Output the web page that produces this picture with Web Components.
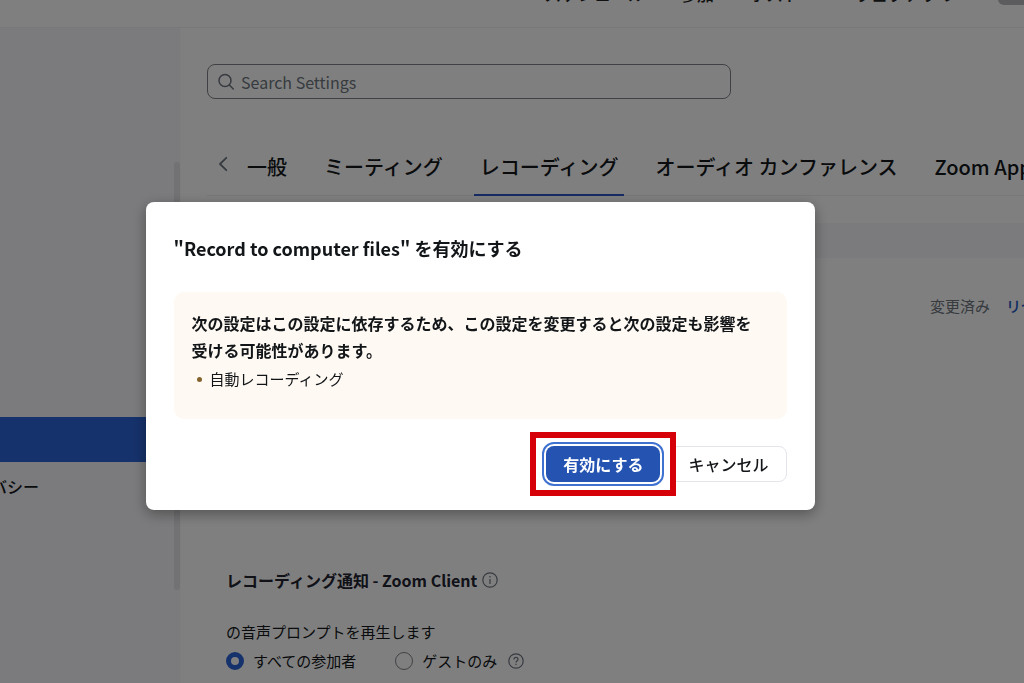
<!DOCTYPE html>
<html lang="ja">
<head>
<meta charset="utf-8">
<title>設定 - レコーディング</title>
<style>
  html, body { margin: 0; height: 100%; }
  body { font-family: "Noto Sans CJK JP", sans-serif; color: #131619; overflow: hidden; background: #fff; }
</style>
</head>
<body>
<settings-page></settings-page>
<script>
const define = (name, html) => {
  const template = document.createElement('template');
  template.innerHTML = html;
  customElements.define(name, class extends HTMLElement {
    constructor() {
      super();
      this.attachShadow({ mode: 'open' }).append(template.content.cloneNode(true));
    }
  });
};

define('top-nav', `
<style>
  :host { display: flex; justify-content: flex-end; box-sizing: border-box; height: 28px; border-bottom: 1px solid #f1f1f5; overflow: hidden; background: #fff; }
  nav { display: flex; align-items: flex-start; gap: 35px; margin-top: -18px; }
  a { color: #222325; text-decoration: none; font-size: 17px; line-height: 24px; font-weight: 500; white-space: nowrap; }
  .menu { padding-right: 19px; }
  .account { width: 26px; height: 23px; margin-left: 7px; border-radius: 0 0 0 6px; background: #b8b8bc; }
</style>
<nav>
  <a href="#schedule">スケジュール</a><a href="#join">参加</a><a class="menu" href="#host">ホスト</a><a href="#app">ウェブアプリ</a><span class="account"></span>
</nav>`);

define('side-bar', `
<style>
  :host { display: flex; justify-content: space-between; box-sizing: border-box; width: 181px; flex: none; background: #f7f7fa; border-right: 1px solid #fbfbfd; overflow: hidden; }
  nav { flex: 1; padding-top: 389px; margin-right: -6px; }
  a { display: block; box-sizing: border-box; height: 44px; font-size: 16px; line-height: 24px; padding-top: 12px; color: #131619; text-decoration: none; font-weight: 500; }
  a.on { background: #2d65d8; height: 45px; }
  i { width: 6px; height: 428px; margin-top: 134px; border-radius: 3px; background: #e4e4e8; }
  a span { display: block; width: 39px; direction: rtl; white-space: nowrap; overflow: hidden; }
</style>
<nav><a class="on" href="#settings" aria-label="設定"></a><a href="#privacy"><span>バシー</span></a></nav><i></i>`);

define('search-box', `
<style>
  :host { display: flex; align-items: center; gap: 6px; box-sizing: border-box; width: 524px; max-width: 100%; height: 35px; border: 1px solid #82838a; border-radius: 8px; padding: 0 9px; }
  svg { flex: none; width: 18px; height: 18px; }
  input { flex: 1; min-width: 0; border: 0; padding: 0; outline: 0; background: none; font: 16px/24px "Noto Sans CJK JP", sans-serif; color: #131619; }
  input::placeholder { color: #6e7680; opacity: 1; }
</style>
<svg viewBox="0 0 18 18" fill="none" stroke="#6e7680" stroke-width="1.5" stroke-linecap="round"><circle cx="8" cy="7.5" r="6"/><path d="M12.3 12l4 4"/></svg>
<input type="text" placeholder="Search Settings" aria-label="Search Settings">`);

define('tab-bar', `
<style>
  :host { display: flex; align-items: flex-start; height: 57px; box-sizing: border-box; border-bottom: 1px solid #f1f1f5; white-space: nowrap; }
  button { border: 0; background: none; padding: 0; margin: 16px 12px 0 10px; width: 12px; height: 18px; flex: none; }
  svg { display: block; width: 12px; height: 18px; }
  nav { display: flex; gap: 25px; }
  a { box-sizing: border-box; height: 57px; padding: 13px 6px 0; font-size: 20px; line-height: 30px; font-weight: 500; color: #131619; text-decoration: none; }
  a.on { border-bottom: 2px solid #2d56c8; }
</style>
<button aria-label="前へ"><svg viewBox="0 0 12 18" fill="none" stroke="#6e7680" stroke-width="1.8" stroke-linecap="round" stroke-linejoin="round"><path d="M9.3 2.8L3 9l6.3 6.2"/></svg></button>
<nav><a href="#general">一般</a><a href="#meeting">ミーティング</a><a class="on" href="#recording">レコーディング</a><a href="#audio">オーディオ カンファレンス</a><a href="#apps">Zoom Apps</a></nav>`);

define('recording-panel', `
<style>
  :host { display: block; margin-top: 27px; font-size: 15px; line-height: 24px; }
  .band { height: 35px; background: #f7f7fa; }
  .status { display: flex; gap: 16px; width: max-content; margin: 36px 0 0 723px; color: #6e7680; white-space: nowrap; }
  .status a { color: #2358c4; text-decoration: none; font-weight: 500; }
  section { padding: 250px 0 0 19px; }
  h2 { display: flex; align-items: center; gap: 5px; margin: 0; font-size: 16px; line-height: 24px; font-weight: 700; color: #222230; }
  p { margin: 28px 0 0; }
  svg { width: 16px; height: 16px; flex: none; }
  .choices { display: flex; align-items: center; margin-top: 5px; }
  label { display: flex; align-items: center; gap: 9px; }
  label + label { margin: 0 11px 0 39px; }
  input { appearance: none; box-sizing: border-box; width: 18px; height: 18px; margin: 0; border: 1px solid #82838a; border-radius: 50%; }
  input:checked { border: 5px solid #2d65d8; }
</style>
<div class="band"></div>
<div class="status"><span>変更済み</span><a href="#reset">リセット</a></div>
<section>
  <h2>レコーディング通知 - Zoom Client <svg viewBox="0 0 16 16" fill="none" stroke="#6e7680" stroke-width="1.2"><circle cx="8" cy="8" r="7.2"/><path d="M8 7v5M8 4v1.4"/></svg></h2>
  <p>の音声プロンプトを再生します</p>
  <div class="choices">
    <label><input type="radio" name="who" checked>すべての参加者</label>
    <label><input type="radio" name="who">ゲストのみ</label>
    <svg viewBox="0 0 16 16" fill="none" stroke="#6e7680" stroke-width="1.2"><circle cx="8" cy="8" r="7.2"/><path d="M6 6.4c0-2.6 4-2.6 4 0C10 7.8 8 7.8 8 9.6M8 10.8v1.3"/></svg>
  </div>
</section>`);

define('confirm-dialog', `
<style>
  :host { position: fixed; inset: 0; display: grid; justify-content: center; align-items: start; padding: 202px 64px 0 0; background: rgba(0,0,0,.5); }
  [role=dialog] { box-sizing: border-box; width: 669px; max-width: 100vw; padding: 32px 28px 28px; border-radius: 8px; background: #fff; box-shadow: 0 4px 14px rgba(0,0,0,.35); }
  h1 { margin: 0; font-size: 18px; line-height: 28px; font-weight: 700; }
  .actions { display: flex; justify-content: flex-end; gap: 10px; margin-top: 27px; }
  button { box-sizing: border-box; height: 36px; border-radius: 8px; padding: 0 17px; font: 500 16px/24px "Noto Sans CJK JP", sans-serif; white-space: nowrap; }
  .primary { position: relative; border: 0; background: #2453b2; color: #fff; font-weight: 700; outline: 2px solid #3f72d0; outline-offset: 2px; }
  /* highlight frame around the primary action */
  .primary::after { content: ""; position: absolute; inset: -14px -16px; border: 6px solid #d60008; }
  .cancel { border: 1px solid #e4e4ea; background: #fff; color: #131619; }
</style>
<div role="dialog" aria-modal="true" aria-labelledby="title">
  <h1 id="title">"Record to computer files" を有効にする</h1>
  <slot></slot>
  <div class="actions"><button class="primary">有効にする</button><button class="cancel">キャンセル</button></div>
</div>`);

define('warning-note', `
<style>
  :host { display: block; box-sizing: border-box; height: 127px; margin-top: 30px; padding: 18px 28px 18px 18px; border-radius: 10px; background: #fef9f2; font-size: 16px; line-height: 27px; }
  p { margin: 0; font-weight: 700; }
  ul { margin: 3px 0 0; padding: 0; list-style: none; }
  li { display: flex; align-items: center; gap: 8px; font-size: 15px; line-height: 24px; padding-left: 5px; }
  li::before { content: ""; width: 5px; height: 5px; border-radius: 50%; background: #85632f; }
</style>
<p>次の設定はこの設定に依存するため、この設定を変更すると次の設定も影響を受ける可能性があります。</p>
<ul><li>自動レコーディング</li></ul>`);

define('settings-page', `
<style>
  :host { display: flex; flex-direction: column; height: 100%; overflow: hidden; }
  .body { display: flex; flex: 1; min-height: 0; }
  main { flex: 1; min-width: 0; padding: 36px 0 0 26px; overflow: hidden; }
  tab-bar { margin-top: 40px; }
</style>
<top-nav></top-nav>
<div class="body">
  <side-bar></side-bar>
  <main><search-box></search-box><tab-bar></tab-bar><recording-panel></recording-panel></main>
</div>
<confirm-dialog><warning-note></warning-note></confirm-dialog>`);
</script>
</body>
</html>
